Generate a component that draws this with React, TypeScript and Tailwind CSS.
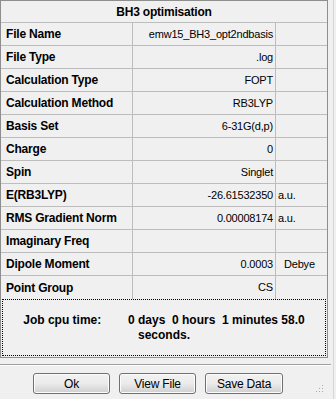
const rows: { label: string; value: string; unit?: string; unitPad?: string }[] = [
  { label: "File Name", value: "emw15_BH3_opt2ndbasis" },
  { label: "File Type", value: ".log" },
  { label: "Calculation Type", value: "FOPT" },
  { label: "Calculation Method", value: "RB3LYP" },
  { label: "Basis Set", value: "6-31G(d,p)" },
  { label: "Charge", value: "0" },
  { label: "Spin", value: "Singlet" },
  { label: "E(RB3LYP)", value: "-26.61532350", unit: "a.u.", unitPad: "pl-[2px]" },
  { label: "RMS Gradient Norm", value: "0.00008174", unit: "a.u.", unitPad: "pl-[2px]" },
  { label: "Imaginary Freq", value: "" },
  { label: "Dipole Moment", value: "0.0003", unit: "Debye", unitPad: "pl-[8px]" },
  { label: "Point Group", value: "CS" },
];

function WinButton({ children, width }: { children: string; width: string }) {
  return (
    <button
      className={`${width} h-[21px] rounded-[3px] border border-[#707070] bg-gradient-to-b from-[#f2f2f2] via-[#ebebeb] to-[#cfcfcf] text-[12px] tracking-[-0.2px] text-black shadow-[inset_0_0_0_1px_#fcfcfc]`}
    >
      {children}
    </button>
  );
}

export default function App() {
  return (
    <div
      className="flex h-[399px] w-[336px] overflow-hidden bg-[#f0f0f0] text-black"
      style={{ fontFamily: '"Liberation Sans", Arial, sans-serif' }}
    >
      <div className="flex w-[333px] flex-col">
        {/* results panel */}
        <div className="w-[328px] border border-[#8e8e8e]">
          <div className="flex h-[22px] items-center justify-center border-b border-[#bdbdbd] text-[12px] font-bold tracking-[-0.2px]">
            BH3 optimisation
          </div>
          {rows.map((row, i) => (
            <div
              key={row.label}
              className={`grid h-[23px] grid-cols-[132px_143px_51px] ${i < rows.length - 1 ? "border-b border-[#bdbdbd]" : "h-[22px]"}`}
            >
              <div className="flex items-center border-r border-[#bdbdbd] pl-[5px] text-[12px] font-bold tracking-[-0.2px]">
                {row.label}
              </div>
              <div className="flex items-center justify-end border-r border-[#bdbdbd] pr-[2px] text-[11px] tracking-[-0.2px]">
                {row.value}
              </div>
              <div className={`flex items-center text-[11px] tracking-[-0.2px] ${row.unitPad ?? ""}`}>
                {row.unit ?? ""}
              </div>
            </div>
          ))}
          <div className="mx-px mb-px flex h-[57px] flex-col items-center justify-center border border-dotted border-black text-[12px] font-bold leading-[15px]">
            <div className="whitespace-pre">{"Job cpu time:        0 days  0 hours  1 minutes 58.0"}</div>
            <div>seconds.</div>
          </div>
        </div>

        {/* separator */}
        <div className="mt-[6px] w-[331px] border-t border-b border-t-[#a0a0a0] border-b-white" />

        {/* buttons */}
        <div className="relative mt-[7px] flex gap-[9px] pl-[33px]">
          <WinButton width="w-[77px]">Ok</WinButton>
          <WinButton width="w-[77px]">View File</WinButton>
          <WinButton width="w-[78px]">Save Data</WinButton>
          <svg className="absolute right-[9px] top-[11px]" width="8" height="9" viewBox="0 0 8 9">
            <g fill="#a8a8a8">
              <rect x="6" y="1" width="1" height="1" />
              <rect x="3" y="4" width="1" height="1" />
              <rect x="6" y="4" width="1" height="1" />
              <rect x="0" y="7" width="1" height="1" />
              <rect x="3" y="7" width="1" height="1" />
              <rect x="6" y="7" width="1" height="1" />
            </g>
          </svg>
        </div>
      </div>
      <div className="w-px bg-[#c9d9ea]" />
      <div className="w-[2px] bg-[#f0f0f0]" />
    </div>
  );
}
